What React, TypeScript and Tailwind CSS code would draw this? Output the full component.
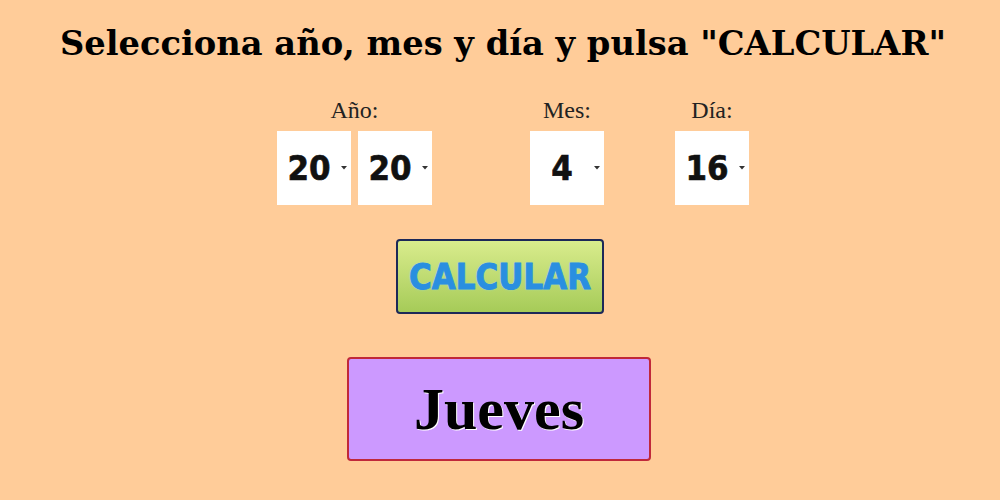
import React from "react";

function Arrow() {
  return (
    <svg width="6" height="4" viewBox="0 0 6 4" className="block">
      <polygon points="0,0 6,0 3,3.5" fill="#333" />
    </svg>
  );
}

function Box({ value }: { value: string }) {
  return (
    <div className="flex h-[74px] w-[74px] items-center bg-white">
      <span
        className="w-[64px] scale-y-[1.1] text-center text-[31px] font-bold leading-none text-[#111]"
        style={{ fontFamily: '"DejaVu Sans", Verdana, sans-serif', WebkitTextStroke: "0.6px #111" }}
      >
        {value}
      </span>
      <Arrow />
    </div>
  );
}

function Label({ children }: { children: React.ReactNode }) {
  return (
    <div
      className="mb-[8px] text-center text-[24px] leading-[26px] text-[#222]"
      style={{ fontFamily: '"Liberation Serif", "Times New Roman", serif' }}
    >
      {children}
    </div>
  );
}

export default function App() {
  return (
    <div className="flex h-[500px] w-[1000px] flex-col items-center bg-[#ffcc99]">
      <h1
        className="ml-[6px] mt-[21px] text-[33.7px] font-bold leading-[44px] text-black"
        style={{ fontFamily: '"DejaVu Serif", Georgia, serif' }}
      >
        Selecciona año, mes y día y pulsa "CALCULAR"
      </h1>

      <div className="mt-[32px] flex w-full justify-center pl-[26px]">
        <div className="flex flex-col">
          <Label>Año:</Label>
          <div className="flex gap-[7px]">
            <Box value="20" />
            <Box value="20" />
          </div>
        </div>
        <div className="ml-[98px] flex flex-col">
          <Label>Mes:</Label>
          <Box value="4" />
        </div>
        <div className="ml-[71px] flex flex-col">
          <Label>Día:</Label>
          <Box value="16" />
        </div>
      </div>

      <button className="mt-[34px] flex h-[75px] w-[208px] items-center justify-center rounded-[4px] border-2 border-[#1c2858] bg-gradient-to-b from-[#d9ec8c] to-[#a6cb58]">
        <span
          className="scale-y-[1.15] text-[31px] font-bold leading-none text-[#2a8fe0]"
          style={{
            fontFamily: '"DejaVu Sans", Verdana, sans-serif',
            WebkitTextStroke: "0.8px #2a8fe0",
            textShadow: "0 0 2px #8fd8f0",
          }}
        >
          CALCULAR
        </span>
      </button>

      <div className="mr-[2px] mt-[43px] flex h-[104px] w-[304px] items-center justify-center rounded-[4px] border-2 border-[#c0283a] bg-[#cc99ff]">
        <span
          className="text-[60px] font-bold leading-none text-black"
          style={{
            fontFamily: '"Liberation Serif", "Times New Roman", serif',
            textShadow: "1px 1px 0 #fff",
          }}
        >
          Jueves
        </span>
      </div>
    </div>
  );
}
